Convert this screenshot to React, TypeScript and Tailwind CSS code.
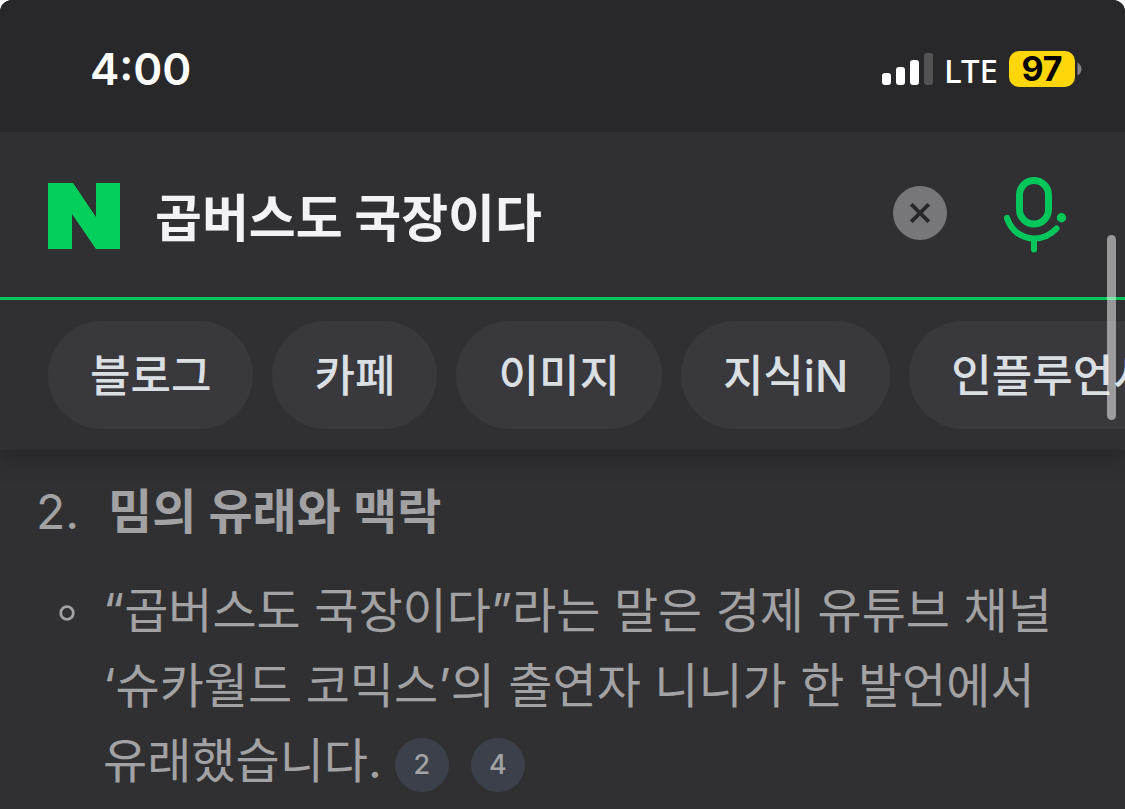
import { useState } from "react";

const tabs = ["블로그", "카페", "이미지", "지식iN", "인플루언서"];
const sources = [2, 4];

function SignalIcon() {
  return (
    <svg width="52" height="32" viewBox="0 0 52 32" fill="#fff" aria-hidden="true">
      <rect x="0" y="20" width="9" height="12" rx="3" />
      <rect x="14" y="14" width="9" height="18" rx="3" />
      <rect x="28" y="7" width="9" height="25" rx="3" />
      <rect x="42" y="0" width="9" height="32" rx="3" opacity="0.2" />
    </svg>
  );
}

function StatusBar() {
  return (
    <div className="relative z-10 flex h-33 items-center justify-between bg-[#28282a] pr-[43px] pb-[6px] pl-[90px] text-white">
      <time className="pt-[12px] text-[44px] leading-none font-semibold">4:00</time>
      <div className="flex items-center pt-[12px]">
        <SignalIcon />
        <span className="ml-[10px] pt-[2px] text-[33px] leading-none font-medium font-['Noto_Sans','Inter',sans-serif]">LTE</span>
        <div className="ml-[11px] flex items-center">
          <span className="flex h-9 w-[66px] items-center justify-center rounded-[10px] bg-[#ffd60a] text-[34px] leading-none font-bold text-black">
            97
          </span>
          <svg className="ml-[2px]" width="5" height="14" viewBox="0 0 5 14" aria-hidden="true">
            <path d="M0.500 0.500C3 2 4.500 4.200 4.500 7S3 12 0.500 13.500Z" fill="#848486" />
          </svg>
        </div>
      </div>
    </div>
  );
}

function MicIcon() {
  return (
    <svg width="64" height="76" viewBox="0 0 64 76" fill="none" stroke="#03c75a" strokeLinecap="round" aria-hidden="true">
      <rect x="15.500" y="3.500" width="29" height="43.500" rx="14.500" strokeWidth="7" />
      <path d="M3 41C7 53 17 61.500 30 61.500C39.500 61.500 47 57.500 52.500 51.500" strokeWidth="6.200" />
      <path d="M30 63V72.500" strokeWidth="6" />
      <circle cx="57.500" cy="40.700" r="4.700" fill="#03c75a" stroke="none" />
    </svg>
  );
}

function SearchBar() {
  const [query, setQuery] = useState("곱버스도 국장이다");
  return (
    <form className="flex h-42 items-center border-b-3 border-[#03c75a] pr-[57px] pl-12" onSubmit={(e) => e.preventDefault()}>
      <a href="#home" aria-label="NAVER" className="shrink-0 pt-[2px]">
        <svg className="block" width="72" height="66" viewBox="0 0 72 66" aria-hidden="true">
          <path d="M0 0H25L48 34V0H72V66H48L24 31V66H0Z" fill="#04cf5c" />
        </svg>
      </a>
      <input
        aria-label="검색어"
        className="ml-[35px] min-w-0 flex-1 bg-transparent text-[51px] leading-[72px] font-semibold text-[#f3f3f6] outline-none font-['Noto_Sans_CJK_KR',sans-serif]"
        value={query}
        onChange={(e) => setQuery(e.target.value)}
      />
      <button
        type="button"
        aria-label="지우기"
        onClick={() => setQuery("")}
        className="mb-[4px] flex size-[54px] shrink-0 items-center justify-center rounded-full bg-[#777779]"
      >
        <svg width="20" height="20" viewBox="0 0 20 20" stroke="#28282a" strokeWidth="3.800" aria-hidden="true">
          <path d="M1.300 1.300L18.700 18.700M18.700 1.300L1.300 18.700" />
        </svg>
      </button>
      <button type="submit" aria-label="음성 검색" className="ml-[57px] shrink-0">
        <MicIcon />
      </button>
    </form>
  );
}

function Tabs() {
  return (
    <nav className="flex gap-[19px] overflow-x-auto px-12 py-[21px] [scrollbar-width:none]">
      {tabs.map((tab) => (
        <a
          key={tab}
          href="#tab"
          className="flex h-27 shrink-0 items-center rounded-full bg-[#39383c] px-[42px] pt-[2px] text-[44px] leading-none font-medium text-[#dadfe3]"
        >
          {tab}
        </a>
      ))}
    </nav>
  );
}

function Answer() {
  return (
    <main className="px-[36px] pt-6 text-[48px] leading-[75px] text-[#a2a2a4]">
      <h2 className="flex font-semibold">
        <span className="w-[72px] font-normal">2.</span>
        밈의 유래와 맥락
      </h2>
      <ul className="mt-[24px]">
        <li className="flex">
          <svg className="mt-[32px] ml-[23px] shrink-0" width="16" height="16" viewBox="0 0 16 16" aria-hidden="true">
            <circle cx="8" cy="8" r="6.300" fill="none" stroke="#a2a2a4" strokeWidth="2.800" />
          </svg>
          <p className="ml-[28px]">
            “곱버스도 국장이다”라는 말은 경제 유튜브 채널
            <br />
            ‘슈카월드 코믹스’의 출연자 니니가 한 발언에서
            <br />
            유래했습니다.
            <span className="ml-[13px] inline-flex gap-[22px] align-middle">
              {sources.map((n) => (
                <a
                  key={n}
                  href="#source"
                  className="flex size-[54px] items-center justify-center rounded-full bg-[#3b404a] text-[27px] leading-none font-medium"
                >
                  {n}
                </a>
              ))}
            </span>
          </p>
        </li>
      </ul>
    </main>
  );
}

export default function App() {
  return (
    <div className="bg-white">
      <div className="relative min-h-screen overflow-hidden rounded-t-[12px] bg-[#303032] font-['Inter','Noto_Sans_CJK_KR',sans-serif]">
        <StatusBar />
        <header className="relative bg-[#303032] shadow-[0_6px_18px_rgba(28,28,36,0.6)]">
          <SearchBar />
          <Tabs />
        </header>
        <Answer />
        <div className="absolute top-[235px] right-[9px] h-[185px] w-[9px] rounded-full bg-white/50" />
      </div>
    </div>
  );
}
